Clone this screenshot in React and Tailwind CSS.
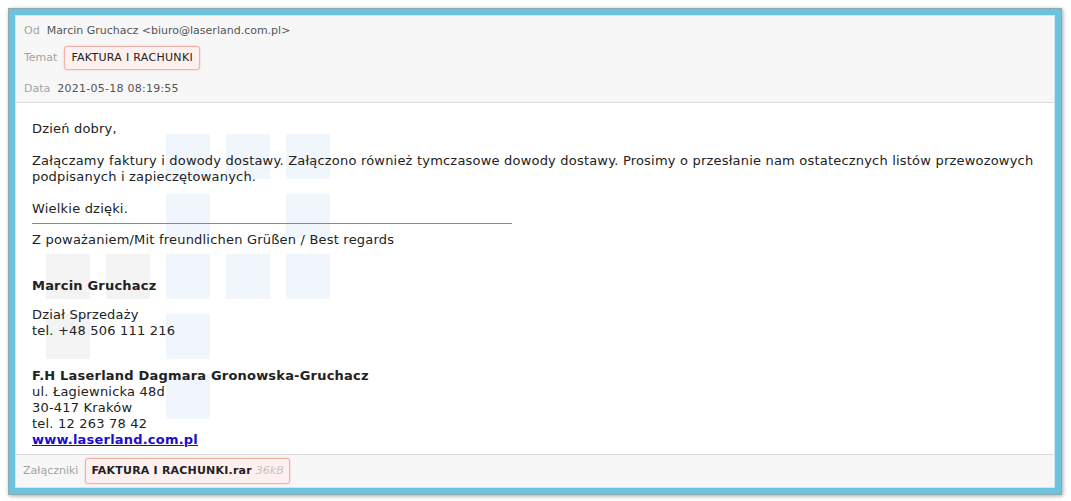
import React from "react";

const squares = [
  { l: 150, t: 31, c: "bg-[#f1f6fc]" },
  { l: 210, t: 31, c: "bg-[#f1f6fc]" },
  { l: 270, t: 31, c: "bg-[#f1f6fc]" },
  { l: 150, t: 91, c: "bg-[#f1f6fc]" },
  { l: 270, t: 91, c: "bg-[#f1f6fc]" },
  { l: 30, t: 151, c: "bg-[#f3f3f3]" },
  { l: 90, t: 151, c: "bg-[#f3f3f3]" },
  { l: 150, t: 151, c: "bg-[#f1f6fc]" },
  { l: 210, t: 151, c: "bg-[#f1f6fc]" },
  { l: 270, t: 151, c: "bg-[#f1f6fc]" },
  { l: 30, t: 211, c: "bg-[#f3f3f3]" },
  { l: 150, t: 211, c: "bg-[#f1f6fc]" },
  { l: 150, t: 271, c: "bg-[#f1f6fc]" },
];

export default function App() {
  return (
    <div className="w-[1071px] h-[501px] bg-white pt-[8px] pl-[8px]" style={{ fontFamily: '"DejaVu Sans", Verdana, sans-serif' }}>
      <div className="w-[1054px] h-[487px] border border-[#8fa9b3] bg-[#6cc3de] p-[6px] shadow-[1px_1px_4px_rgba(0,0,0,0.35)]">
        <div className="h-full border border-[#cfe9f2] bg-white flex flex-col">
          {/* Header */}
          <div className="bg-[#f7f7f7] border-b border-[#dcdcdc] pl-[8px] pt-[7px] pb-[5px] text-[11px] leading-[14px]">
            <div className="flex items-center gap-[7px] h-[16px]">
              <span className="text-[#a3a3a3]">Od</span>
              <span className="text-[#555]">Marcin Gruchacz &lt;biuro@laserland.com.pl&gt;</span>
            </div>
            <div className="flex items-center gap-[7px] mt-[7px] h-[24px]">
              <span className="text-[#a3a3a3]">Temat</span>
              <span className="h-[24px] flex items-center px-[6px] border border-[#f3b1ae] bg-[#fdf0ee] rounded-[3px] text-[#222] tracking-[0.3px] shadow-[0_0_2px_rgba(240,150,150,0.6)]">FAKTURA I RACHUNKI</span>
            </div>
            <div className="flex items-center gap-[7px] mt-[11px] h-[16px]">
              <span className="text-[#a3a3a3]">Data</span>
              <span className="text-[#555] tracking-[0.25px]">2021-05-18 08:19:55</span>
            </div>
          </div>
          {/* Body */}
          <div className="relative flex-1 pl-[16px] pr-[16px] text-[13px] leading-[16px] text-[#222] tracking-[0.2px]">
            {squares.map((s, i) => (
              <div key={i} className={`absolute w-[44px] h-[45px] ${s.c}`} style={{ left: s.l, top: s.t }} />
            ))}
            <div className="relative">
              <p className="mt-[18px]">Dzień dobry,</p>
              <p className="mt-[16px]">Załączamy faktury i dowody dostawy. Załączono również tymczasowe dowody dostawy. Prosimy o przesłanie nam ostatecznych listów przewozowych podpisanych i zapieczętowanych.</p>
              <p className="mt-[16px]">Wielkie dzięki.</p>
              <div className="w-[480px] h-px bg-[#8a8a8a] mt-[6px]" />
              <p className="mt-[8px]">Z poważaniem/Mit freundlichen Grüßen / Best regards</p>
              <p className="mt-[30px] font-bold">Marcin Gruchacz</p>
              <p className="mt-[13px]">Dział Sprzedaży</p>
              <p>tel. +48 506 111 216</p>
              <p className="mt-[29px] font-bold">F.H Laserland Dagmara Gronowska-Gruchacz</p>
              <p>ul. Łagiewnicka 48d</p>
              <p>30-417 Kraków</p>
              <p>tel. 12 263 78 42</p>
              <p className="font-bold text-[#1a0dcc] underline">www.laserland.com.pl</p>
            </div>
          </div>
          {/* Footer */}
          <div className="bg-[#f7f7f7] border-t border-[#dcdcdc] h-[33px] pl-[7px] flex items-center gap-[7px] text-[11px]">
            <span className="text-[#a3a3a3]">Załączniki</span>
            <span className="h-[26px] flex items-center gap-[4px] px-[5px] border border-[#f3b1ae] bg-[#fdf0ee] rounded-[3px] shadow-[0_0_2px_rgba(240,150,150,0.6)]">
              <span className="font-bold text-[#222] tracking-[0.2px]">FAKTURA I RACHUNKI.rar</span>
              <span className="italic text-[#c3c3c3]">36kB</span>
            </span>
          </div>
        </div>
      </div>
    </div>
  );
}
